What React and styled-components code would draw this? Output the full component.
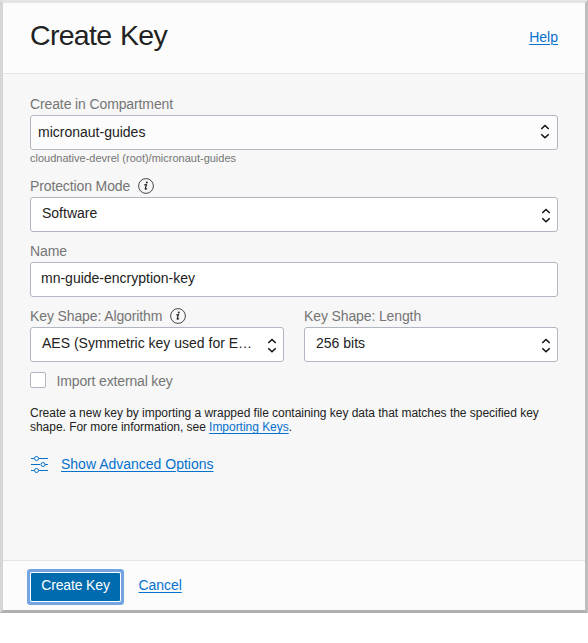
import React from "react";
import styled, { createGlobalStyle } from "styled-components";

const GlobalStyle = createGlobalStyle`
  *, *::before, *::after { box-sizing: border-box; }
  body {
    margin: 0;
    background: #fff;
    color: #222;
    font: 14px/16px "Liberation Sans", Arial, sans-serif;
  }
`;

const Dialog = styled.main`
  display: flex;
  flex-direction: column;
  width: 588px;
  height: 613px;
  border: 3px solid;
  border-color: #e4e4e4 #bdbdbd #b0b0b0 #d6d6d6;
  background: #f7f7f7;
`;

const Header = styled.header`
  display: flex;
  justify-content: space-between;
  height: 71px;
  padding: 15px 27px 0;
  background: #fcfcfc;
  border-bottom: 1px solid #e4e4e4;
`;

const Title = styled.h1`
  margin: 0;
  font-size: 28.5px;
  line-height: 34px;
  font-weight: 400;
  letter-spacing: -0.7px;
  word-spacing: 1.5px;
`;

const Link = styled.a`
  color: #0572ce;
  text-decoration: underline 1px;
  text-underline-offset: 2px;
`;

const HelpLink = styled(Link)`
  height: 16px;
  margin-top: 11px;
`;

const Body = styled.section`
  flex: 1;
  padding: 21px 27px 0;
`;

const Field = styled.div`
  min-width: 0;
  margin-bottom: ${(p) => p.$gap ?? 10}px;
`;

const Label = styled.label`
  display: flex;
  align-items: center;
  gap: 8px;
  height: 20px;
  padding-bottom: 2px;
  color: #757575;
  letter-spacing: -0.12px;
`;

const Control = styled.div`
  display: flex;
  justify-content: space-between;
  height: 35px;
  padding: ${(p) => p.$padding || "7px 7px 0 11px"};
  background: ${(p) => p.$background || "#fff"};
  border: 1px solid #b1b6c0;
  border-radius: 3px;
`;

const Hint = styled.div`
  height: 27px;
  padding-top: 2px;
  color: #757575;
  font-size: 11px;
  line-height: 13px;
`;

const Columns = styled.div`
  display: grid;
  grid-template-columns: 1fr 1fr;
  gap: 20px;
`;

const CheckRow = styled.div`
  display: flex;
  gap: 10.5px;
  height: 17px;
  color: #757575;
`;

const CheckBox = styled.span`
  width: 16px;
  height: 16px;
  background: #fff;
  border: 1px solid #b1b6c0;
  border-radius: 2px;
`;

const CheckText = styled.span`
  padding-top: 1px;
  letter-spacing: -0.15px;
`;

const Note = styled.p`
  margin: 17px 0 0;
  font-size: 12px;
  line-height: 14px;
  letter-spacing: -0.03px;
`;

const Advanced = styled.div`
  display: flex;
  align-items: flex-start;
  gap: 12px;
  margin-top: 22px;
`;

const Footer = styled.footer`
  display: flex;
  align-items: flex-start;
  height: 50px;
  padding: 12px 28px;
  background: #fcfcfc;
  border-top: 1px solid #e4e4e4;
`;

const PrimaryButton = styled.button`
  width: 89px;
  height: 28px;
  padding: 0 0 4px;
  border: 0;
  border-radius: 1px;
  background: #006bae;
  box-shadow: 0 0 0 1px #fff, 0 0 0 4px #74a5e0;
  color: #fff;
  font: inherit;
  letter-spacing: -0.15px;
`;

const CancelLink = styled(Link)`
  height: 16px;
  margin: 4px 0 0 18.5px;
  letter-spacing: -0.05px;
`;

const Arrow = styled.svg`
  flex: none;
  margin-top: ${(p) => p.$top ?? 3}px;
`;

const Icon = styled.svg`
  flex: none;
`;

function SelectArrows({ top }) {
  return (
    <Arrow $top={top} width="8" height="15" viewBox="0 0 8 15" fill="none" stroke="#111" strokeWidth="1.5">
      <path d="M.3 5 4 1.5 7.7 5M.3 10.2 4 13.7l3.7-3.5" />
    </Arrow>
  );
}

function InfoIcon() {
  return (
    <Icon width="16" height="16" viewBox="0 0 16 16">
      <circle cx="8" cy="8" r="7.4" fill="none" stroke="#333" strokeWidth="0.9" />
      <path d="M6.3 6.9 8.4 6.6 7.2 10.8Q7.1 11.7 9.1 10.5" fill="none" stroke="#222" strokeWidth="1.2" />
      <circle cx="8.8" cy="4.5" r=".95" fill="#222" />
    </Icon>
  );
}

function SlidersIcon() {
  return (
    <Icon width="19" height="18" viewBox="0 0 19 18" fill="none" stroke="#0572ce">
      <path d="M1 2.5h3m5 0h9M1 8.5h9m5 0h3M1 14.5h3m5 0h9" />
      <circle cx="6.5" cy="2.5" r="2" />
      <circle cx="13" cy="8.5" r="2" />
      <circle cx="6.5" cy="14.5" r="2" />
    </Icon>
  );
}

export default function App() {
  return (
    <>
      <GlobalStyle />
      <Dialog>
        <Header>
          <Title>Create Key</Title>
          <HelpLink>Help</HelpLink>
        </Header>
        <Body>
          <Field $gap={0}>
            <Label>Create in Compartment</Label>
            <Control $padding="8px 8px 0 7px" $background="#fcfcfc">
              micronaut-guides
              <SelectArrows top={0} />
            </Control>
            <Hint>cloudnative-devrel (root)/micronaut-guides</Hint>
          </Field>
          <Field>
            <Label>Protection Mode <InfoIcon /></Label>
            <Control>Software<SelectArrows /></Control>
          </Field>
          <Field>
            <Label>Name</Label>
            <Control $padding="7px 10px 0">mn-guide-encryption-key</Control>
          </Field>
          <Columns>
            <Field>
              <Label>Key Shape: Algorithm <InfoIcon /></Label>
              <Control>AES (Symmetric key used for E…<SelectArrows /></Control>
            </Field>
            <Field>
              <Label>Key Shape: Length</Label>
              <Control>256 bits<SelectArrows /></Control>
            </Field>
          </Columns>
          <CheckRow>
            <CheckBox />
            <CheckText>Import external key</CheckText>
          </CheckRow>
          <Note>
            Create a new key by importing a wrapped file containing key data that matches the specified key
            <br />
            shape. For more information, see <Link>Importing Keys</Link>.
          </Note>
          <Advanced>
            <SlidersIcon />
            <Link>Show Advanced Options</Link>
          </Advanced>
        </Body>
        <Footer>
          <PrimaryButton>Create Key</PrimaryButton>
          <CancelLink>Cancel</CancelLink>
        </Footer>
      </Dialog>
    </>
  );
}
